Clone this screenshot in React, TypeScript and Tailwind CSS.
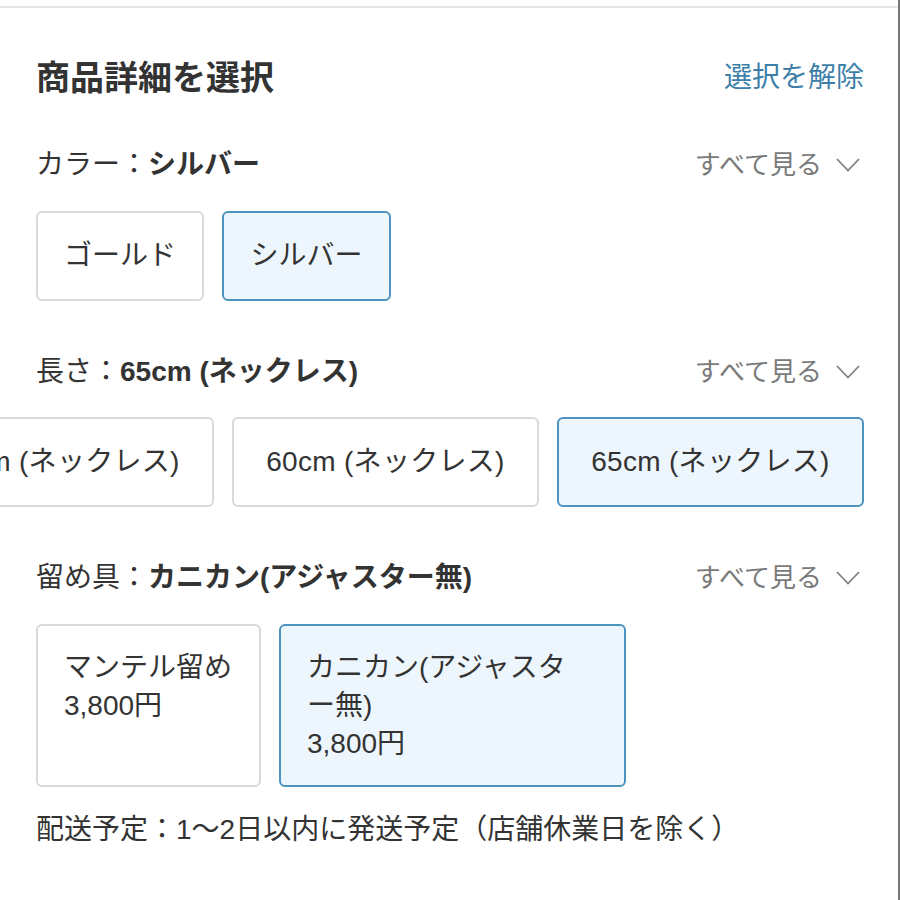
const font = { fontFamily: '"Liberation Sans", "Noto Sans CJK JP", sans-serif' };

type Option = { label: string; price?: string; selected?: boolean };

function Chevron() {
  return (
    <svg width="24" height="14" viewBox="0 0 24 14" fill="none" stroke="#808080" strokeWidth="1.8">
      <polyline points="1,1 12,12.5 23,1" />
    </svg>
  );
}

function SectionHeader({ name, value }: { name: string; value: string }) {
  return (
    <div className="flex items-center justify-between pl-9 pr-[38px] h-[40px]">
      <div className="text-[28px] text-[#333] leading-none">
        {name}：<span className="font-bold">{value}</span>
      </div>
      <button className="flex items-center gap-[14px] text-[26px] text-[#7a7a7a] leading-none">
        すべて見る
        <Chevron />
      </button>
    </div>
  );
}

function OptionButton({ option, className }: { option: Option; className?: string }) {
  return (
    <div
      className={`shrink-0 rounded-[6px] border-2 text-[28px] text-[#333] ${
        option.selected ? 'border-[#4d93c0] bg-[#eef6fd]' : 'border-[#d9d9d9] bg-white'
      } ${className ?? ''}`}
    >
      <div>{option.label}</div>
      {option.price && <div>{option.price}</div>}
    </div>
  );
}

export default function App() {
  const lengths: Option[] = [
    { label: '55cm (ネックレス)' },
    { label: '60cm (ネックレス)' },
    { label: '65cm (ネックレス)', selected: true },
  ];

  return (
    <div className="w-[900px] h-[900px] bg-white border-r-2 border-[#777] overflow-hidden" style={font}>
      <div className="h-[6px]" />
      <div className="h-[2px] bg-[#e6e6e6]" />

      <div className="flex items-center justify-between pl-9 pr-[34px] h-[40px] mt-[50px]">
        <h2 className="text-[34px] font-bold text-[#333] leading-none">商品詳細を選択</h2>
        <button className="text-[28px] text-[#3d7fa9] leading-none">選択を解除</button>
      </div>

      {/* color */}
      <div className="mt-[47px]">
        <SectionHeader name="カラー" value="シルバー" />
        <div className="flex gap-[18px] pl-9 mt-[26px]">
          <OptionButton option={{ label: 'ゴールド' }} className="w-[168px] h-[90px] flex items-center justify-center" />
          <OptionButton option={{ label: 'シルバー', selected: true }} className="w-[169px] h-[90px] flex items-center justify-center" />
        </div>
      </div>

      {/* length, scrolled to the end */}
      <div className="mt-[51px]">
        <SectionHeader name="長さ" value="65cm (ネックレス)" />
        <div className="flex justify-end gap-[18px] pr-[34px] mt-[25px] overflow-hidden">
          {lengths.map((o) => (
            <OptionButton key={o.label} option={o} className="w-[307px] h-[90px] flex items-center justify-center whitespace-nowrap tracking-[0.3px]" />
          ))}
        </div>
      </div>

      {/* clasp */}
      <div className="mt-[51px]">
        <SectionHeader name="留め具" value="カニカン(アジャスター無)" />
        <div className="flex gap-[18px] pl-9 mt-[26px]">
          <OptionButton
            option={{ label: 'マンテル留め', price: '3,800円' }}
            className="w-[225px] h-[163px] pl-[26px] pr-[20px] pt-[23px] leading-[38px]"
          />
          <OptionButton
            option={{ label: 'カニカン(アジャスター無)', price: '3,800円', selected: true }}
            className="w-[347px] h-[163px] pl-[26px] pr-[40px] pt-[23px] leading-[38px] [line-break:loose]"
          />
        </div>
      </div>

      <p className="pl-9 mt-[25px] text-[28px] leading-[36px] text-[#333]">
        配送予定：1〜2日以内に発送予定（店舗休業日を除く）
      </p>
    </div>
  );
}
